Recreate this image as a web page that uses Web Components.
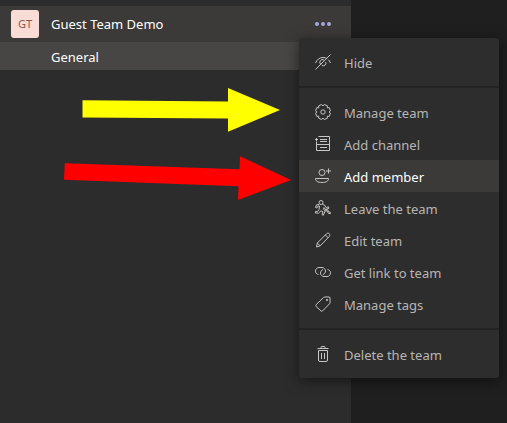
<!DOCTYPE html>
<html lang="en">
<head>
<meta charset="utf-8">
<title>Teams</title>
<style>
  body {
    margin: 0;
    background: #1f1f1f;
    color: #fff;
    font: 13px/20px "Noto Sans", "Open Sans", sans-serif;
  }
</style>
</head>
<body>
<teams-app>
  <team-row initials="GT" name="Guest Team Demo">
    <team-menu slot="menu">
      <menu-item label="Hide">
        <svg viewBox="0 0 16 16"><path d="M.5 9C2 5.500 4.500 3.500 8 3.500c1.500 0 2.700.3 3.800 1M13 5.500c1.100.9 2 2 2.500 3.500M.5 15.500l15-15M6 10.500A2.700 2.700 0 0 1 9 6M10.700 8a2.700 2.700 0 0 1-3.700 3.500"/></svg>
      </menu-item>
      <menu-divider></menu-divider>
      <menu-item label="Manage team">
        <svg viewBox="0 0 16 16"><path stroke-linejoin="round" d="M8 2 9.300.5 12.400 1.800 12.200 3.800 14.200 3.600 15.500 6.700 14 8 15.500 9.300 14.200 12.400 12.200 12.200 12.400 14.200 9.300 15.500 8 14 6.700 15.500 3.600 14.200 3.800 12.200 1.800 12.400.5 9.300 2 8 .5 6.700 1.800 3.600 3.800 3.800 3.600 1.800 6.700.5z"/><circle cx="8" cy="8" r="2.200"/></svg>
      </menu-item>
      <menu-item label="Add channel">
        <svg viewBox="0 0 16 16"><path d="M3.500.5h11v14h-13V5.500M1.500 8.500h13M5 3.500h7M5 5.500h7M5 11.500h7M0 3.500h3M1.500 2v3"/></svg>
      </menu-item>
      <menu-item label="Add member">
        <svg viewBox="0 0 16 16"><circle cx="7" cy="4.500" r="3"/><path d="M.5 10.500h13c0 2.500-2 4-6.500 4s-6.500-1.500-6.500-4zM11 3h5M13.500.5v5"/></svg>
      </menu-item>
      <menu-item label="Leave the team">
        <svg viewBox="0 0 16 16"><circle cx="6" cy="2.500" r="2"/><path d="M4 4.500 1.500 4.800.5 7.500l1.300.5 1-1.800 1.700-.2L4 9.500 2.500 11.500H.5V13l3 .2L6 10.800l2 1-1 2.700 1.300.8 1.900-4.300L8.500 9 9 7.500l1.500 2L14 8.200l-.5-1.400-2.300.8L9.500 5 7.500 4.500M10.200 10.800l1.800 0 1.500 2.700h2l-.3-1.300-1.200-.2-1.500-2.300H10"/></svg>
      </menu-item>
      <menu-item label="Edit team">
        <svg viewBox="0 0 16 16"><path d="M1.500 15l.8-4L11.500 1.800c1.800-2 4.500.8 2.700 2.700L5.200 13.800zM2.300 11l2.900 2.800M10.300 3l2.800 2.800"/></svg>
      </menu-item>
      <menu-item label="Get link to team">
        <svg viewBox="0 0 16 16"><path d="M3.500 10.500C1.500 10 .5 8.800.5 7.200.5 5 2 3.500 4 3.500h3c2 0 3.500 1.500 3.500 3.500 0 1.500-1 3-2.500 3.500M12.500 5.500c2 .5 3 1.700 3 3.300 0 2.200-1.500 3.700-3.500 3.700H9C7 12.500 5.500 11 5.500 9c0-1.500 1-3 2.500-3.500"/></svg>
      </menu-item>
      <menu-item label="Manage tags">
        <svg viewBox="0 0 16 16"><path d="M8.500 1.500q.5-.5 1.200-.5H14q1 0 1 1v4.500q0 .7-.5 1.300L7.500 15q-.8.700-1.500 0L1 10.300q-.7-.8 0-1.500z"/><path d="M11.500 3.500h1v1h-1z"/></svg>
      </menu-item>
      <menu-divider></menu-divider>
      <menu-item label="Delete the team">
        <svg viewBox="0 0 16 16"><path d="M2.500 2.500h11M6 2.500V1.200q0-.7.7-.7h2.600q.7 0 .7.700v1.300M3.500 4.500h9V14q0 1.500-1.500 1.500H5q-1.500 0-1.500-1.500zM6.500 7v6M9.500 7v6"/></svg>
      </menu-item>
    </team-menu>
  </team-row>
  <channel-row>General</channel-row>
  <callout-arrows></callout-arrows>
</teams-app>

<script>
class TeamsApp extends HTMLElement {
  constructor() {
    super();
    this.attachShadow({ mode: 'open' });
  }
  connectedCallback() {
    this.shadowRoot.innerHTML = `
      <style>
        :host {
          display: grid;
          grid-template-columns: 9fr 4fr;
          min-height: 100vh;
        }
        nav {
          position: relative;
          box-sizing: border-box;
          padding-top: 6px;
          background: #2d2c2c;
        }
      </style>
      <nav aria-label="Teams"><slot></slot></nav>
      <main></main>
    `;
  }
}

class TeamRow extends HTMLElement {
  constructor() {
    super();
    this.attachShadow({ mode: 'open' });
  }
  connectedCallback() {
    this.shadowRoot.innerHTML = `
      <style>
        :host {
          display: flex;
          align-items: center;
          gap: 12px;
          height: 36px;
          padding: 0 4px 0 11px;
          background: #3b3a38;
        }
        .avatar {
          width: 28px;
          height: 28px;
          border-radius: 3px;
          background: #fadcd7;
          color: #8f544c;
          font-size: 11px;
          line-height: 28px;
          text-align: center;
        }
        .name {
          flex: 1;
          white-space: nowrap;
        }
        .more {
          position: relative;
        }
        button {
          display: flex;
          align-items: center;
          justify-content: center;
          width: 48px;
          height: 28px;
          padding: 0;
          border: 0;
          background: none;
          color: #a6a7dc;
        }
        svg {
          width: 16px;
          height: 4px;
          fill: currentColor;
        }
        ::slotted(team-menu) {
          position: absolute;
          z-index: 1;
          top: 100%;
          left: 0;
        }
      </style>
      <span class="avatar">${this.getAttribute('initials')}</span>
      <span class="name">${this.getAttribute('name')}</span>
      <div class="more">
        <button type="button" aria-label="More options" aria-haspopup="menu">
          <svg viewBox="0 0 16 4"><circle cx="2" cy="2" r="2"/><circle cx="8" cy="2" r="2"/><circle cx="14" cy="2" r="2"/></svg>
        </button>
        <slot name="menu"></slot>
      </div>
    `;
  }
}

class ChannelRow extends HTMLElement {
  constructor() {
    super();
    this.attachShadow({ mode: 'open' });
  }
  connectedCallback() {
    this.shadowRoot.innerHTML = `
      <style>
        :host {
          display: block;
          background: #484644;
        }
        a {
          display: block;
          padding: 5px 8px 3px 51px;
          color: inherit;
          text-decoration: none;
        }
      </style>
      <a href="#general"><slot></slot></a>
    `;
  }
}

class TeamMenu extends HTMLElement {
  constructor() {
    super();
    this.attachShadow({ mode: 'open' });
  }
  connectedCallback() {
    this.setAttribute('role', 'menu');
    this.shadowRoot.innerHTML = `
      <style>
        :host {
          display: block;
          min-width: 200px;
          padding: 8px 0;
          border-radius: 3px;
          background: #2d2d2d;
          box-shadow: 0 3px 14px rgba(0, 0, 0, 0.5);
        }
      </style>
      <slot></slot>
    `;
    // open with "Add member" highlighted
    this.querySelector('[label="Add member"]').setAttribute('active', '');
  }
}

class MenuItem extends HTMLElement {
  constructor() {
    super();
    this.attachShadow({ mode: 'open' });
  }
  connectedCallback() {
    this.shadowRoot.innerHTML = `
      <style>
        :host {
          display: block;
          color: #c8c6c4;
        }
        :host([active]) {
          background: #3b3a38;
        }
        :host([active]) .label {
          color: #fff;
        }
        button {
          display: flex;
          align-items: center;
          gap: 13px;
          width: 100%;
          height: 32px;
          padding: 0 16px;
          border: 0;
          background: none;
          color: inherit;
          font: inherit;
          text-align: left;
          white-space: nowrap;
        }
        .label {
          padding-top: 2px;
          color: #b8b6b4;
        }
        ::slotted(svg) {
          display: block;
          width: 16px;
          height: 16px;
          fill: none;
          stroke: currentColor;
        }
      </style>
      <button type="button" role="menuitem">
        <slot></slot>
        <span class="label">${this.getAttribute('label')}</span>
      </button>
    `;
  }
}

class MenuDivider extends HTMLElement {
  constructor() {
    super();
    this.attachShadow({ mode: 'open' });
  }
  connectedCallback() {
    this.setAttribute('role', 'separator');
    this.shadowRoot.innerHTML = `
      <style>
        :host {
          display: block;
          height: 2px;
          margin: 8px 0;
          background: #222;
        }
      </style>
    `;
  }
}

// big arrows drawn over the page, pointing at two of the menu items
class CalloutArrows extends HTMLElement {
  constructor() {
    super();
    this.attachShadow({ mode: 'open' });
  }
  connectedCallback() {
    this.shadowRoot.innerHTML = `
      <style>
        :host {
          position: absolute;
          z-index: 2;
          top: 80px;
          right: 51px;
          width: 240px;
          height: 130px;
          pointer-events: none;
        }
        svg {
          display: block;
        }
      </style>
      <svg width="240" height="130" viewBox="0 0 240 130" aria-hidden="true">
        <path fill="#ff0" d="M22.500 20.200 168 21.500V8l52 22-52 21.700V38.500L22.500 37.500z"/>
        <path fill="#f00" d="M4.800 83.200 179.500 89.300 180 76.200 231 100 178 120 178.500 106.300 4 99.800z"/>
      </svg>
    `;
  }
}

customElements.define('teams-app', TeamsApp);
customElements.define('team-row', TeamRow);
customElements.define('channel-row', ChannelRow);
customElements.define('team-menu', TeamMenu);
customElements.define('menu-item', MenuItem);
customElements.define('menu-divider', MenuDivider);
customElements.define('callout-arrows', CalloutArrows);
</script>
</body>
</html>
